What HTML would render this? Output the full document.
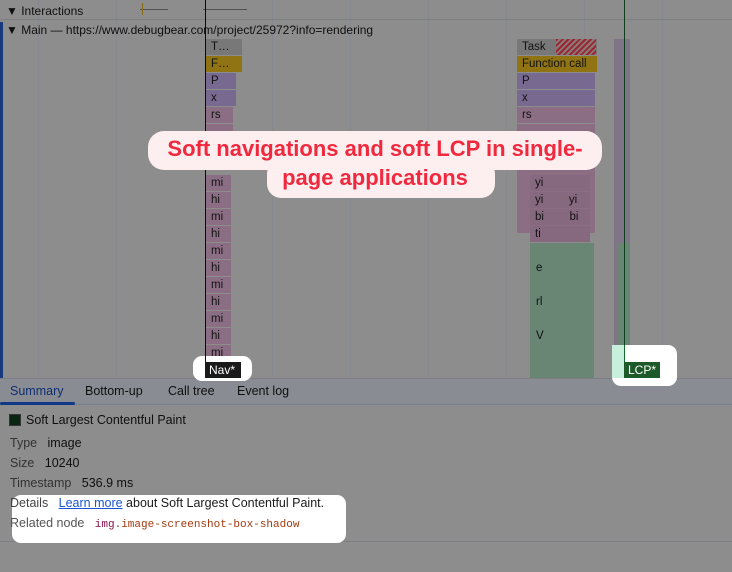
<!DOCTYPE html>
<html style="background:#8c8c8c"><head><style>
*{margin:0;padding:0;box-sizing:border-box}
body{width:732px;height:572px;overflow:hidden;background:#ebebeb;font-family:"Liberation Sans",sans-serif;position:relative;font-size:12px;color:#1a1a1a}
.a{position:absolute}
.r{position:absolute;height:16px;font-size:11.5px;line-height:16px;padding-left:5px;color:#1e1e1e}
.vl{position:absolute;width:1px;top:0;height:378px;background:#e0e4ec}
.ov{position:absolute;left:0;top:0;width:732px;height:572px;background:rgba(0,0,0,0.4);z-index:5}
.hi{z-index:10}
</style></head><body>
<div class="vl" style="left:38px"></div><div class="vl" style="left:116px"></div><div class="vl" style="left:272px"></div><div class="vl" style="left:350px"></div><div class="vl" style="left:428px"></div><div class="vl" style="left:506px"></div><div class="vl" style="left:584px"></div><div class="vl" style="left:662px"></div>
<div class="a" style="left:0;top:19px;width:732px;height:1px;background:#d0d4da"></div>
<div class="a" style="left:6px;top:4px;font-size:12px">▼ Interactions</div>
<div class="a" style="left:140px;top:9px;width:28px;height:1px;background:#888"></div>
<div class="a" style="left:142px;top:3px;width:1px;height:12px;background:#e0b020"></div>
<div class="a" style="left:203px;top:9px;width:44px;height:1px;background:#888"></div>
<div class="a" style="left:0;top:22px;width:3px;height:356px;background:#2a60d0"></div>
<div class="a" style="left:6px;top:23px;font-size:12px">▼ Main — https://www.debugbear.com/project/25972?info=rendering</div>
<div class="r" style="left:206px;top:39px;width:36px;background:#c8c8c8">T…</div>
<div class="r" style="left:206px;top:56px;width:36px;background:#f0c020">F…</div>
<div class="r" style="left:206px;top:73px;width:30px;background:#c8b0f0">P</div>
<div class="r" style="left:206px;top:90px;width:30px;background:#c8b0f0">x</div>
<div class="r" style="left:206px;top:107px;width:27px;background:#e8b8dc">rs</div>
<div class="r" style="left:206px;top:124px;width:27px;background:#e8b8dc"></div>
<div class="r" style="left:206px;top:175px;width:25px;background:#e8b8dc">mi</div>
<div class="r" style="left:206px;top:192px;width:25px;background:#e8b8dc">hi</div>
<div class="r" style="left:206px;top:209px;width:25px;background:#e8b8dc">mi</div>
<div class="r" style="left:206px;top:226px;width:25px;background:#e8b8dc">hi</div>
<div class="r" style="left:206px;top:243px;width:25px;background:#e8b8dc">mi</div>
<div class="r" style="left:206px;top:260px;width:25px;background:#e8b8dc">hi</div>
<div class="r" style="left:206px;top:277px;width:25px;background:#e8b8dc">mi</div>
<div class="r" style="left:206px;top:294px;width:25px;background:#e8b8dc">hi</div>
<div class="r" style="left:206px;top:311px;width:25px;background:#e8b8dc">mi</div>
<div class="r" style="left:206px;top:328px;width:25px;background:#e8b8dc">hi</div>
<div class="r" style="left:206px;top:345px;width:25px;background:#e8b8dc">mi</div>
<div class="r" style="left:517px;top:39px;width:80px;background:#c8c8c8">Task</div>
<div class="a" style="left:556px;top:39px;width:40px;height:16px;background:repeating-linear-gradient(135deg,#ff4050 0 2px,#e8c8c8 2px 4px)"></div>
<div class="r" style="left:517px;top:56px;width:80px;background:#f0c020">Function call</div>
<div class="r" style="left:517px;top:73px;width:78px;background:#c8b0f0">P</div>
<div class="r" style="left:517px;top:90px;width:78px;background:#c8b0f0">x</div>
<div class="r" style="left:517px;top:107px;width:78px;background:#e8b8dc">rs</div>
<div class="a" style="left:517px;top:124px;width:78px;height:109px;background:#e8b8dc"></div>
<div class="r" style="left:530px;top:175px;width:60px;background:#e0b0d4">yi</div>
<div class="r" style="left:530px;top:192px;width:60px;background:#e0b0d4">yi &nbsp; &nbsp; &nbsp; &nbsp;yi</div>
<div class="r" style="left:530px;top:209px;width:60px;background:#e0b0d4">bi &nbsp; &nbsp; &nbsp; &nbsp;bi</div>
<div class="r" style="left:530px;top:226px;width:60px;background:#e0b0d4">ti</div>
<div class="a" style="left:530px;top:243px;width:64px;height:135px;background:#b0e0c4"></div>
<div class="a" style="left:536px;top:262px;font-size:11.5px">e</div>
<div class="a" style="left:536px;top:296px;font-size:11.5px">rl</div>
<div class="a" style="left:536px;top:330px;font-size:11.5px">V</div>
<div class="a" style="left:614px;top:39px;width:16px;height:339px;background:#d4c4e0"></div>
<div class="a" style="left:617px;top:243px;width:12px;height:135px;background:#b0e0c4"></div>
<div class="a" style="left:205px;top:0;width:1px;height:372px;background:#111"></div>
<div class="a" style="left:624px;top:0;width:1px;height:372px;background:#186a30"></div>
<div class="a" style="left:0;top:378px;width:732px;height:27px;background:#e4eaf4;border-top:1px solid #d0d4dc;border-bottom:1px solid #c8d4ec"></div>
<div class="a" style="left:10px;top:384px;font-size:12.5px;color:#1a50c0">Summary</div>
<div class="a" style="left:0;top:402px;width:75px;height:3px;background:#1a60e0;border-radius:2px"></div>
<div class="a" style="left:85px;top:384px;font-size:12.5px">Bottom-up</div>
<div class="a" style="left:168px;top:384px;font-size:12.5px">Call tree</div>
<div class="a" style="left:237px;top:384px;font-size:12.5px">Event log</div>
<div class="a" style="left:9px;top:414px;width:12px;height:12px;background:#0f4020;border:1px solid #555"></div>
<div class="a" style="left:26px;top:413px;font-size:12.5px">Soft Largest Contentful Paint</div>
<div class="a" style="left:10px;top:436px;font-size:12.5px"><span style="color:#555">Type</span>&nbsp;&nbsp; image</div>
<div class="a" style="left:10px;top:456px;font-size:12.5px"><span style="color:#555">Size</span>&nbsp;&nbsp; 10240</div>
<div class="a" style="left:10px;top:476px;font-size:12.5px"><span style="color:#555">Timestamp</span>&nbsp;&nbsp; 536.9 ms</div>
<div class="a" style="left:0;top:541px;width:732px;height:1px;background:#d0d4dc"></div>
<div class="ov"></div>
<div class="a hi" style="left:148px;top:131px;width:454px;height:39px;background:#fdeef0;border-radius:16px"></div>
<div class="a hi" style="left:267px;top:160px;width:228px;height:38px;background:#fdeef0;border-radius:14px"></div>
<div class="a hi" style="left:148px;top:134px;width:454px;text-align:center;color:#f0293e;font-weight:bold;font-size:22px;line-height:29px">Soft navigations and soft LCP in single-<br>page applications</div>
<div class="a hi" style="left:193px;top:356px;width:59px;height:25px;background:#fff;border-radius:9px"></div>
<div class="a hi" style="left:205px;top:356px;width:1px;height:6px;background:#111"></div>
<div class="a hi" style="left:205px;top:362px;width:36px;height:16px;background:#1a1a1a;color:#fff;font-size:12px;line-height:16px;padding-left:4px">Nav*</div>
<div class="a hi" style="left:612px;top:345px;width:65px;height:41px;background:#fff;border-radius:9px"></div>
<div class="a hi" style="left:612px;top:345px;width:12px;height:33px;background:#c8eedc"></div>
<div class="a hi" style="left:624px;top:345px;width:1px;height:17px;background:#186a30"></div>
<div class="a hi" style="left:624px;top:362px;width:36px;height:16px;background:#1d5a2a;color:#fff;font-size:12px;line-height:16px;padding-left:4px">LCP*</div>
<div class="a hi" style="left:12px;top:495px;width:334px;height:48px;background:#fff;border-radius:9px"></div>
<div class="a hi" style="left:10px;top:496px;font-size:12.5px"><span style="color:#444">Details</span>&nbsp;&nbsp; <span style="color:#1a55d0;text-decoration:underline">Learn more</span> about Soft Largest Contentful Paint.</div>
<div class="a hi" style="left:10px;top:516px;font-size:12.5px"><span style="color:#555">Related node</span>&nbsp;&nbsp; <span style="font-family:'Liberation Mono',monospace;font-size:11px;color:#a03a10"><span style="color:#881250">img</span>.image-screenshot-box-shadow</span></div>
</body></html>
